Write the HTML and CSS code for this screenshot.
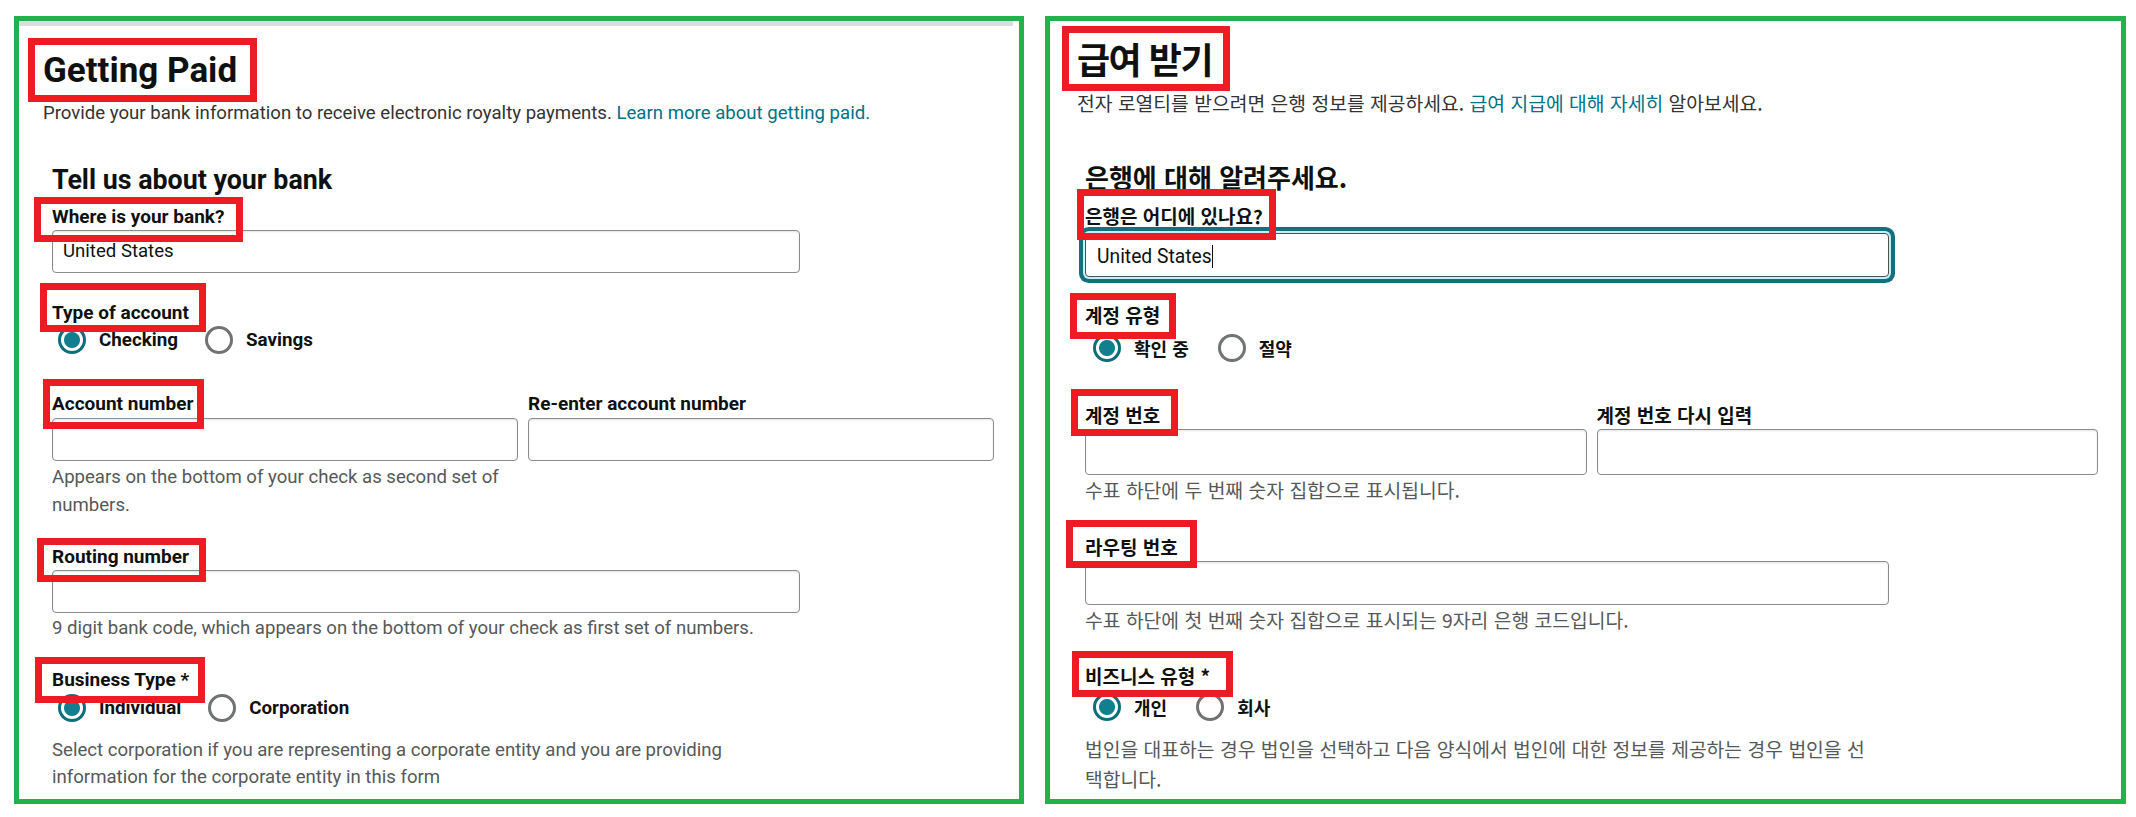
FILE: index.html
```html
<!DOCTYPE html>
<html lang="en">

<head>
    <meta charset="UTF-8">
    <meta name="viewport" content="width=device-width, initial-scale=1.0">
    <title>Getting Paid</title>
    <link rel="stylesheet" href="styles.css">
</head>

<body>
    <div class="page">
        <!-- 英文版 -->
        <div class="panel panel-en">
            <div class="topbar"></div>
            <h1 class="title mark m-title">Getting Paid</h1>
            <p class="intro">Provide your bank information to receive electronic royalty payments. <a href="javascript:;">Learn more about getting paid.</a></p>

            <div class="form">
                <h2 class="section">Tell us about your bank</h2>

                <div class="field f-bank">
                    <div class="label mark m-bank">Where is your bank?</div>
                    <div class="input">United States</div>
                </div>

                <div class="field f-type">
                    <div class="label mark m-type">Type of account</div>
                    <div class="radios">
                        <span class="radio on"></span><span class="opt">Checking</span>
                        <span class="radio"></span><span class="opt">Savings</span>
                    </div>
                </div>

                <div class="field f-acct">
                    <div class="cols">
                        <div class="col">
                            <div class="label mark m-acct">Account number</div>
                            <div class="input"></div>
                            <p class="help">Appears on the bottom of your check as second set of numbers.</p>
                        </div>
                        <div class="col">
                            <div class="label">Re-enter account number</div>
                            <div class="input"></div>
                        </div>
                    </div>
                </div>

                <div class="field f-route">
                    <div class="label mark m-route">Routing number</div>
                    <div class="input"></div>
                    <p class="help">9 digit bank code, which appears on the bottom of your check as first set of numbers.</p>
                </div>

                <div class="field f-biz">
                    <div class="label mark m-biz">Business Type *</div>
                    <div class="radios">
                        <span class="radio on"></span><span class="opt">Individual</span>
                        <span class="radio"></span><span class="opt">Corporation</span>
                    </div>
                    <p class="help">Select corporation if you are representing a corporate entity and you are providing information for the corporate entity in this form</p>
                </div>
            </div>
        </div>

        <!-- 韩文版 -->
        <div class="panel panel-ko" lang="ko">
            <h1 class="title mark m-title">급여 받기</h1>
            <p class="intro">전자 로열티를 받으려면 은행 정보를 제공하세요. <a href="javascript:;">급여 지급에 대해 자세히</a> 알아보세요.</p>

            <div class="form">
                <h2 class="section">은행에 대해 알려주세요.</h2>

                <div class="field f-bank">
                    <div class="label mark m-bank">은행은 어디에 있나요?</div>
                    <div class="input focus"><span class="value">United States</span></div>
                </div>

                <div class="field f-type">
                    <div class="label mark m-type">계정 유형</div>
                    <div class="radios">
                        <span class="radio on"></span><span class="opt">확인 중</span>
                        <span class="radio"></span><span class="opt">절약</span>
                    </div>
                </div>

                <div class="field f-acct">
                    <div class="cols">
                        <div class="col">
                            <div class="label mark m-acct">계정 번호</div>
                            <div class="input"></div>
                            <p class="help">수표 하단에 두 번째 숫자 집합으로 표시됩니다.</p>
                        </div>
                        <div class="col">
                            <div class="label">계정 번호 다시 입력</div>
                            <div class="input"></div>
                        </div>
                    </div>
                </div>

                <div class="field f-route">
                    <div class="label mark m-route">라우팅 번호</div>
                    <div class="input"></div>
                    <p class="help">수표 하단에 첫 번째 숫자 집합으로 표시되는 9자리 은행 코드입니다.</p>
                </div>

                <div class="field f-biz">
                    <div class="label mark m-biz">비즈니스 유형 *</div>
                    <div class="radios">
                        <span class="radio on"></span><span class="opt">개인</span>
                        <span class="radio"></span><span class="opt">회사</span>
                    </div>
                    <p class="help">법인을 대표하는 경우 법인을 선택하고 다음 양식에서 법인에 대한 정보를 제공하는 경우 법인을 선택합니다.</p>
                </div>
            </div>
        </div>
    </div>
</body>

</html>
```

FILE: styles.css
```css
* {
    margin: 0;
    padding: 0;
    box-sizing: border-box;
}

body {
    background-color: #fff;
    font-family: Roboto, "Noto Sans CJK KR", sans-serif;
    color: #0f1111;
}

/* 两个截图并排 */
.page {
    display: flex;
    gap: 21px;
    padding: 16px 0 0 14px;
}

.panel {
    height: 788px;
    border: 5px solid #22b14c;
    background-color: #fff;
}

.panel-en {
    width: 1010px;
    padding-left: 24px;
}

.panel-ko {
    width: 1081px;
    padding-left: 27px;
    font-family: "Noto Sans CJK KR", sans-serif;
}

/* 截图顶部的灰条 */
.topbar {
    height: 5px;
    margin: 0 6px 0 -24px;
    background-color: #dcdcdc;
}

.title {
    width: fit-content;
    font-weight: 700;
}

.panel-en .title {
    margin-top: 24px;
    font-size: 35px;
    line-height: 42px;
}

.panel-ko .title {
    margin-top: 15px;
    font-size: 36px;
    line-height: 44px;
    letter-spacing: -1.5px;
}

.intro {
    color: #333;
}

.panel-en .intro {
    margin-top: 9px;
    font-size: 18.6px;
    line-height: 24px;
}

.panel-ko .intro {
    margin-top: 10px;
    font-size: 19.3px;
    line-height: 26px;
}

.intro a {
    color: #007185;
    text-decoration: none;
}

.panel-en .form {
    padding-left: 9px;
}

.panel-ko .form {
    padding-left: 8px;
}

.section {
    font-weight: 700;
    font-size: 26px;
}

.panel-en .section {
    margin-top: 40px;
    font-size: 26.8px;
    line-height: 30px;
}

.panel-ko .section {
    margin-top: 45px;
    line-height: 32px;
}

.label {
    width: fit-content;
    font-weight: 700;
    font-size: 19px;
}

.panel-en .label {
    line-height: 22px;
}

.panel-ko .label {
    line-height: 24px;
}

/* 输入框 */
.input {
    border: 1px solid #8a8d8d;
    border-radius: 4px;
    box-shadow: inset 0 1px 2px rgba(15, 17, 17, .12);
    background-color: #fff;
}

.panel-en .input {
    width: 748px;
    height: 43px;
    margin-top: 2px;
    padding-left: 10px;
    font-size: 18.6px;
    line-height: 41px;
}

.panel-ko .input {
    width: 804px;
    height: 44px;
    margin-top: 2px;
    padding-left: 11px;
    font-size: 19.3px;
    line-height: 42px;
}

.panel-ko .value {
    font-family: Roboto, sans-serif;
    border-right: 1px solid #111;
}

/* 获得焦点的输入框 */
.input.focus {
    position: relative;
    z-index: 1;
    border-color: #4d5252;
    box-shadow: 0 0 0 2px #c3eef5, 0 0 0 6px #15707d;
}

.cols {
    display: grid;
    grid-template-columns: 1fr 1fr;
    column-gap: 10px;
}

.panel-en .cols {
    width: 942px;
}

.panel-ko .cols {
    width: 1013px;
}

.cols .input {
    width: 100% !important;
}

.help {
    color: #565959;
}

.panel-en .help {
    max-width: 748px;
    margin-top: 1px;
    font-size: 18.6px;
    line-height: 28px;
}

.panel-ko .help {
    margin-top: 2px;
    font-size: 19.3px;
    line-height: 26px;
}

/* 单选按钮 */
.radios {
    display: flex;
    align-items: center;
    height: 28px;
}

.radio {
    flex: none;
    width: 28px;
    height: 28px;
    border: 3px solid #6f7373;
    border-radius: 50%;
}

.radio.on {
    border-color: #0d6e7b;
    background: radial-gradient(circle, #127f8e 7.5px, #fff 8.5px);
}

.opt {
    margin-left: 13px;
    font-weight: 700;
    font-size: 18px;
}

.opt+.radio {
    margin-left: 27px;
}

.panel-en .radios {
    padding-left: 6px;
}

.panel-en .opt {
    font-size: 18.8px;
}

.panel-ko .radios {
    padding-left: 8px;
}

.panel-ko .opt+.radio {
    margin-left: 29px;
}

/* 英文版各栏的间距 */
.panel-en .f-bank {
    margin-top: 11px;
}

.panel-en .f-type {
    margin-top: 29px;
}

.panel-en .f-type .radios {
    margin-top: 2px;
}

.panel-en .f-acct {
    margin-top: 39px;
}

.panel-en .f-acct .input {
    margin-top: 3px;
}

.panel-en .f-acct .help {
    margin-top: 2px;
}

.panel-en .f-route {
    margin-top: 27px;
}

.panel-en .f-biz {
    margin-top: 27px;
}

.panel-en .f-biz .radios {
    margin-top: 3px;
}

.panel-en .f-biz .help {
    margin-top: 15px;
    line-height: 27px;
}

/* 韩文版各栏的间距 */
.panel-ko .f-bank {
    margin-top: 11px;
}

.panel-ko .f-bank .input {
    margin-top: 5px;
}

.panel-ko .f-type {
    margin-top: 26px;
}

.panel-ko .f-type .radios {
    margin-top: 7px;
}

.panel-ko .f-acct {
    margin-top: 41px;
}

.panel-ko .f-acct .input {
    height: 46px;
}

.panel-ko .f-route {
    margin-top: 32px;
}

.panel-ko .f-biz {
    margin-top: 31px;
}

.panel-ko .f-biz .radios {
    margin-top: 5px;
}

.panel-ko .f-biz .help {
    max-width: 790px;
    margin-top: 13px;
    line-height: 30px;
}

/* 红色标注框 */
.mark {
    position: relative;
}

.mark::after {
    content: "";
    position: absolute;
    top: var(--t);
    right: var(--r);
    bottom: var(--b);
    left: var(--l);
    z-index: 2;
    border: 7px solid #ed1c24;
}

.panel-en .m-title {
    --t: -12px;
    --r: -20px;
    --b: -10px;
    --l: -15px;
}

.panel-en .m-bank {
    --t: -9px;
    --r: -19px;
    --b: -14px;
    --l: -18px;
}

.panel-en .m-type {
    --t: -19px;
    --r: -17px;
    --b: -8px;
    --l: -12px;
}

.panel-en .m-acct {
    --t: -14px;
    --r: -11px;
    --b: -14px;
    --l: -9px;
}

.panel-en .m-route {
    --t: -8px;
    --r: -17px;
    --b: -14px;
    --l: -15px;
}

.panel-en .m-biz {
    --t: -12px;
    --r: -16px;
    --b: -12px;
    --l: -17px;
}

.panel-ko .m-title {
    --t: -10px;
    --r: -18px;
    --b: -11px;
    --l: -15px;
}

.panel-ko .m-bank {
    --t: -15px;
    --r: -13px;
    --b: -12px;
    --l: -8px;
}

.panel-ko .m-type {
    --t: -10px;
    --r: -16px;
    --b: -12px;
    --l: -15px;
}

.panel-ko .m-acct {
    --t: -14px;
    --r: -18px;
    --b: -9px;
    --l: -14px;
}

.panel-ko .m-route {
    --t: -15px;
    --r: -19px;
    --b: -9px;
    --l: -19px;
}

.panel-ko .m-biz {
    --t: -13px;
    --r: -23px;
    --b: -9px;
    --l: -13px;
}
```
